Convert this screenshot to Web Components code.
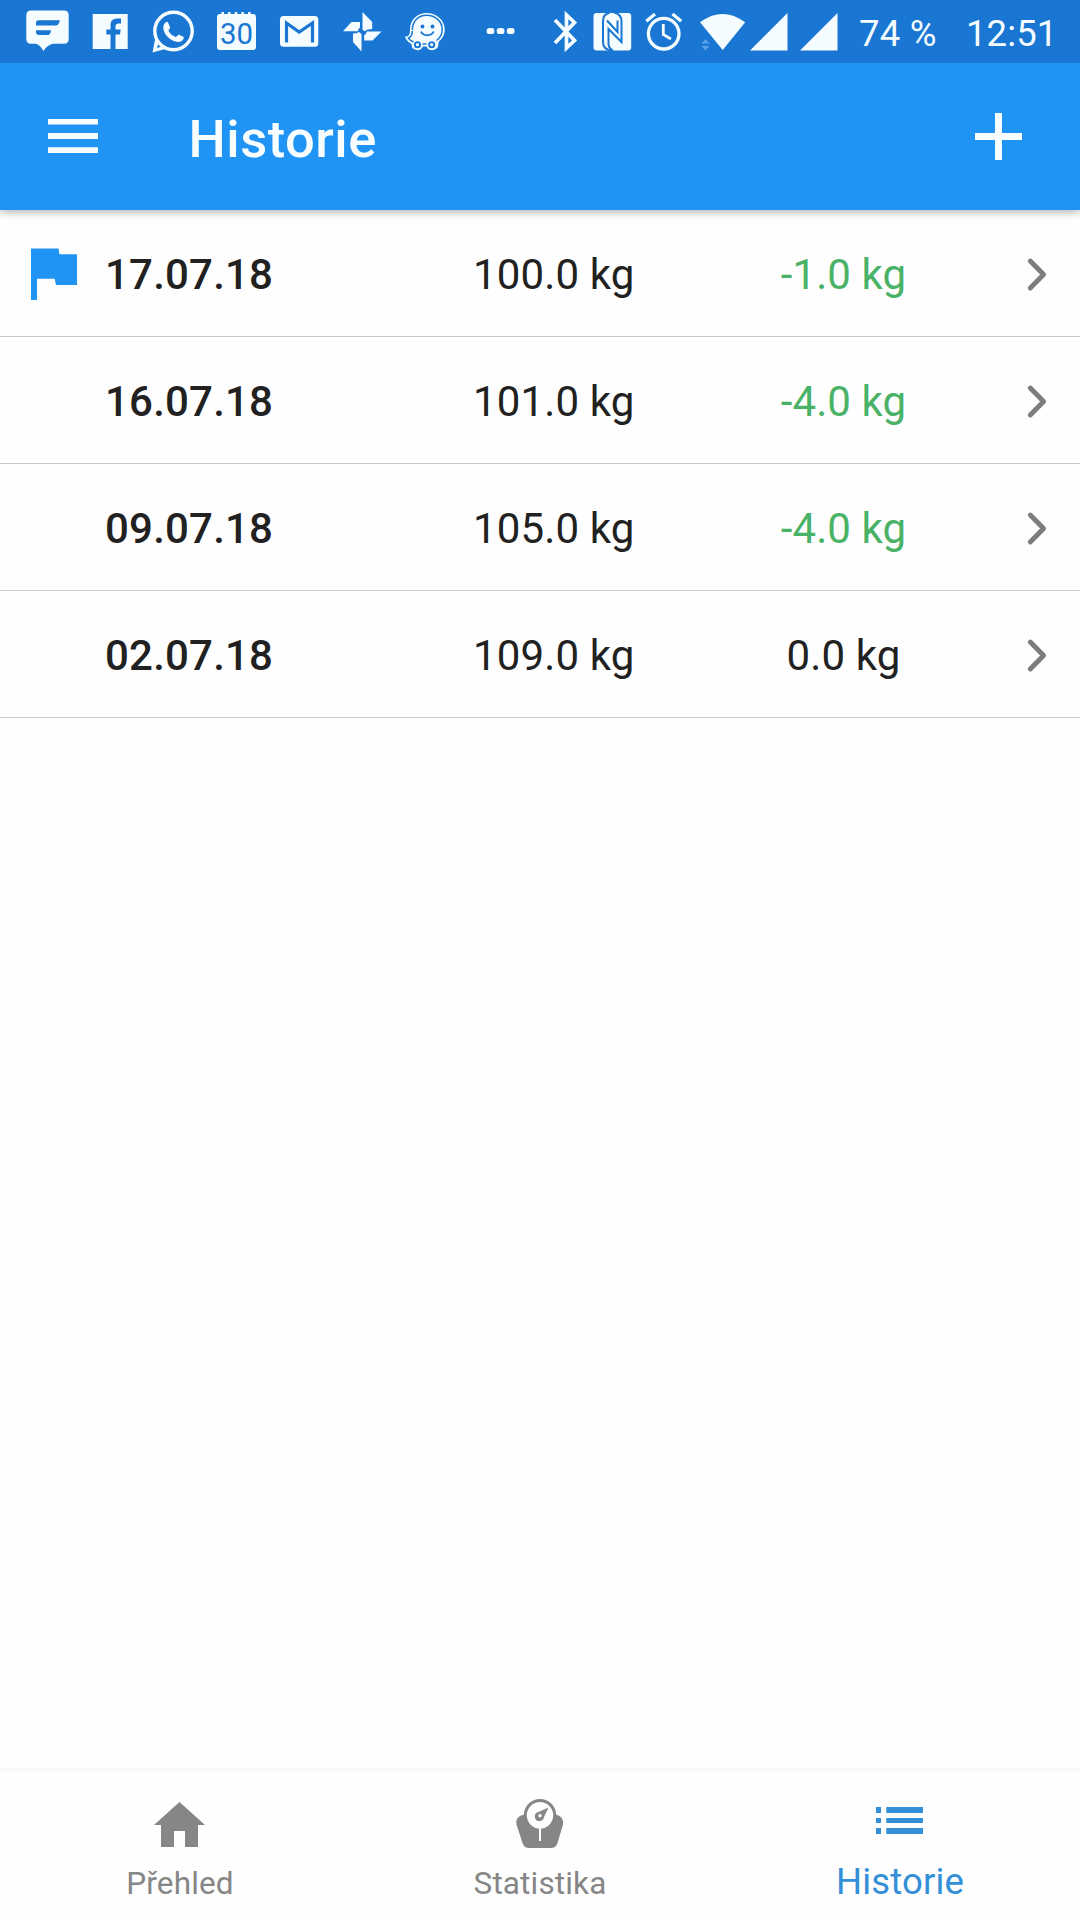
<!DOCTYPE html>
<html lang="cs">
<head>
  <meta charset="UTF-8">
  <meta name="viewport" content="width=device-width, initial-scale=1.0">
  <title>Historie</title>
  <style>
    body {
      margin: 0;
      font-family: Roboto, "Noto Sans", sans-serif;
      color: #212121;
      background: #fefefe;
    }
  </style>
</head>
<body>

  <app-screen>
    <status-bar slot="top" battery="74 %" time="12:51"></status-bar>
    <app-bar slot="top">Historie</app-bar>

    <history-row flagged date="17.07.18" weight="100.0 kg" trend="down">-1.0 kg</history-row>
    <history-row date="16.07.18" weight="101.0 kg" trend="down">-4.0 kg</history-row>
    <history-row date="09.07.18" weight="105.0 kg" trend="down">-4.0 kg</history-row>
    <history-row date="02.07.18" weight="109.0 kg">0.0 kg</history-row>

    <tab-bar slot="bottom">
      <tab-item icon="home">Přehled</tab-item>
      <tab-item icon="scale">Statistika</tab-item>
      <tab-item icon="list" active>Historie</tab-item>
    </tab-bar>
  </app-screen>

  <template id="screen-template">
    <style>
      :host {display: flex; flex-direction: column; height: 1920px; width: 1080px; overflow: hidden}
      main {flex: 1}
    </style>
    <slot name="top"></slot>
    <main><slot></slot></main>
    <slot name="bottom"></slot>
  </template>

  <template id="status-template">
    <style>
      :host {display: flex; align-items: center; height: 63px; padding-left: 15px; box-sizing: border-box; background: #1976d2; color: #f4fcff; font-size: 36.5px}
      span {line-height: 63px; white-space: nowrap; padding-top: 3px}
      .battery {width: 107px; margin-left: 11px; letter-spacing: .2px}
      .time {letter-spacing: .1px}
    </style>
    <app-icon name="message"></app-icon>
    <app-icon name="facebook"></app-icon>
    <app-icon name="whatsapp"></app-icon>
    <app-icon name="calendar"></app-icon>
    <app-icon name="mail"></app-icon>
    <app-icon name="photos"></app-icon>
    <app-icon name="waze"></app-icon>
    <app-icon name="more"></app-icon>
    <app-icon name="bluetooth"></app-icon>
    <app-icon name="nfc"></app-icon>
    <app-icon name="alarm"></app-icon>
    <app-icon name="wifi"></app-icon>
    <app-icon name="signal"></app-icon>
    <app-icon name="signal"></app-icon>
    <span class="battery"></span>
    <span class="time"></span>
  </template>

  <template id="bar-template">
    <style>
      :host {display: flex; align-items: center; height: 147px; padding: 0 58px 0 48px; box-sizing: border-box; background: #2094f5; color: #f8feff; box-shadow: 0 1px 9px rgba(0,0,0,.38); clip-path: inset(0 0 -14px 0)}
      h1 {flex: 1; margin: 0 0 0 90.5px; font-size: 52.5px; font-weight: 500; line-height: 60px; padding-top: 4px; letter-spacing: .5px}
      .menu {margin-bottom: 2px}
    </style>
    <app-icon class="menu" name="menu"></app-icon>
    <h1><slot></slot></h1>
    <app-icon name="plus"></app-icon>
  </template>

  <template id="row-template">
    <style>
      :host {display: grid; grid-template-columns: 105px 368px 307px 1fr auto; align-items: center; height: 127px; padding: 2px 32px 0 0; box-sizing: border-box; border-bottom: 1px solid #c8c8c8; font-size: 42px; line-height: 50px}
      span {padding-top: 2px}
      .flag {padding-left: 31px; color: #2094f3; visibility: hidden}
      :host([flagged]) .flag {visibility: visible}
      .date {font-weight: 500; letter-spacing: .2px}
      .weight {letter-spacing: .15px}
      :host([trend=down]) .change {color: #49b267}
      .change {width: 127px; text-align: center; letter-spacing: .1px}
      .next {color: #7d7d7d}
    </style>
    <app-icon class="flag" name="flag"></app-icon>
    <span class="date"></span>
    <span class="weight"></span>
    <span class="change"><slot></slot></span>
    <app-icon class="next" name="chevron"></app-icon>
  </template>

  <template id="tabs-template">
    <style>
      :host {display: flex; height: 152px; box-sizing: border-box; border-top: 4px solid #f9f9fc}
    </style>
    <slot></slot>
  </template>

  <template id="tab-template">
    <style>
      :host {flex: 1; display: flex; flex-direction: column; align-items: center; padding-top: 23px; color: #868686; font-size: 31.5px; line-height: 40px; letter-spacing: .15px}
      :host([active]) {color: #338fd8; font-size: 36.5px}
      span {height: 40px; margin-top: 11px}
      :host([active]) span {margin-top: 9px}
    </style>
    <app-icon></app-icon>
    <span><slot></slot></span>
  </template>

  <script>
    // [viewBox, drawing], 1 unit = 1px
    const icons = {
      message: ['15 0 63 63', `
        <path fill="currentColor" d="M31 10.500h33q4.700 0 4.700 4.700V39q0 4.700-4.700 4.700H53Q47 45 43.300 51Q40.500 45 36 43.700H31q-4.700 0-4.700-4.700V15.200q0-4.700 4.700-4.700z"/>
        <path fill="#1976d2" d="M38.500 20.200H60q-1.500 5.300-4 5.300H36v-3q0-2.300 2.500-2.300zM36 30.200h15q-.5 4.800-3 4.800h-9q-3 0-3-3z"/>`],
      facebook: ['78 0 63 63', `
        <path fill="currentColor" d="M92.700 14h35v35h-12.200V34.500h4.500l.7-5h-5.200v-3q0-3 3-3h2.500v-5h-4q-6.500 0-6.500 6.500v4.500h-4.200v5h4.200V49H92.700z"/>`],
      whatsapp: ['141 0 63 63', `
        <circle cx="173.500" cy="31" r="18.700" fill="none" stroke="currentColor" stroke-width="3.400"/>
        <path fill="currentColor" d="M155.500 37l-3 15.500 14.500-4-3-2.500-7 2 2-7z"/>
        <path fill="currentColor" d="M163.300 27.500c0-3 2-6 4.500-5.500l2.200 5c.3 1.500-1.500 2.500-1.500 3.700 1.800 3.500 4 5 7.300 6.300 1.200-.5 2-2.600 3.400-2.300l4.500 2.300c.3 2.800-2.200 5-5.500 5C170.500 41.800 163.300 34 163.300 27.500z"/>`],
      calendar: ['204 0 63 63', `
        <path fill="currentColor" d="M217 17q0-3 3-3h1.500v-2h2.500v2h4v-2h2.500v2h4.200v-2h2.500v2h4.200v-2h2.500v2h4.200v-2h2.500v2h2.400q3 0 3 3v30q0 3-3 3h-33q-3 0-3-3z"/>
        <text x="220" y="44" textLength="33" lengthAdjust="spacingAndGlyphs" font-size="30" font-weight="400" fill="#1976d2">30</text>`],
      mail: ['267 0 63 63', `
        <rect x="280" y="16" width="38.300" height="30.700" rx="3.500" fill="currentColor"/>
        <path fill="none" stroke="#1976d2" stroke-width="3.200" d="M286.500 42.500V23l12.700 9 13.300-9v19.500"/>`],
      photos: ['330 0 63 63', `
        <path fill="currentColor" d="M362.500 12l9.700 10v7q-5 0-7.200 2.300l-2.500-1.600zM381.500 31.500l-9 9h-8.300V35q2.500-1 2.500-3.500zM361.500 51.500L353 42v-8.500q4 0 6-1.500l2.500 2zM343 31.300l8.500-9.300h8.500v5.500q-2 1-2 3.800z"/>`],
      waze: ['393 0 63 63', `
        <path fill="currentColor" d="M410 29.500C410 20 417 13 426.500 13 436.500 13 444.700 20 444.700 29.500c0 5.500-2.500 9.500-6.200 12.500q.5 8-6.500 8.200-4 0-5.500-3.700h-3.500q-2 3.800-5.500 3.700-6-.5-6-6.200-4.500-2-6.700-7.500c4 .5 5.200-2 5.200-7z"/>
        <path fill="none" stroke="#1976d2" stroke-width="1.500" d="M412.300 30C412.500 21 418.500 15.300 426.500 15.300c9 0 15.700 6.200 15.700 14.200 0 5-2.200 8.500-5.700 11M426.500 44h-4M413.500 42c-2.500-1-4.200-2.300-5.200-3.800q4-1.700 4-7.200"/>
        <g fill="#1976d2"><circle cx="422.500" cy="26.500" r="1.900"/><circle cx="432.500" cy="26.500" r="1.900"/></g>
        <g fill="none" stroke="#1976d2" stroke-width="1.900"><path d="M421 31.500c2 5 10.500 5 12.500 0"/><circle cx="417.500" cy="44.700" r="2.600"/><circle cx="431.700" cy="44.700" r="2.600"/></g>`],
      more: ['456 0 84 63', `
        <g fill="currentColor"><rect x="486.700" y="28" width="7.600" height="6" rx="2.600"/><rect x="496.800" y="28" width="7.600" height="6" rx="2.600"/><rect x="506.900" y="28" width="7.600" height="6" rx="2.600"/></g>`],
      bluetooth: ['540 0 50 63', `
        <path fill="none" stroke="currentColor" stroke-width="3.700" d="M555 20l19.500 20.500-8 7.500V15l8 7.500L555 43"/>`],
      nfc: ['590 0 46 63', `
        <rect x="593.500" y="13" width="37.700" height="37.500" rx="3" fill="currentColor"/>
        <g fill="none" stroke="#1976d2" stroke-width="2">
          <path d="M609.500 13q-6.500 1-6.500 8v21q0 7.500 8.500 8.500"/>
          <path d="M614 12.500q7.500 1.500 7.500 9V42L608.500 29v15q0 4 4.500 6.500"/>
          <path d="M607 20.500l10.500 11.500V20.500"/>
        </g>`],
      alarm: ['636 0 56 63', `
        <g fill="none" stroke="currentColor" stroke-width="3.300">
          <circle cx="663.700" cy="33.700" r="15.300"/>
          <path d="M646.300 21.300l8.700-7.300M672.500 14l8.700 7.300"/>
          <path stroke-width="2.800" d="M663.300 24v10.500l7.700 4.500"/>
        </g>`],
      wifi: ['692 0 56 63', `
        <path fill="currentColor" d="M700 22.300Q722.500 5.500 745.200 22.300L722.700 50z"/>
        <path fill="#5ba3ea" d="M701.500 43.500l4-4.500 4 4.500zM701.500 46l4 4.500 4-4.500z"/>`],
      signal: ['748 0 50 63', `<path fill="currentColor" d="M750 50.500L787.500 13v37.500z"/>`],
      menu: ['0 0 50 34', `<path fill="currentColor" d="M0 0h50v5.500H0zM0 14h50v6H0zM0 28.300h50v5.700H0z"/>`],
      plus: ['0 0 47 47', `<path fill="currentColor" d="M20 0h7v20h20v7H27v20h-7V27H0v-7h20z"/>`],
      flag: ['31 248 46 52', `<path fill="currentColor" d="M31 248.500h27.500l1 5.800H77V285H56l-1.300-6.300H37V300h-6z"/>`],
      chevron: ['1026 257 22 35', `<path fill="none" stroke="currentColor" stroke-width="4.900" stroke-linecap="round" stroke-linejoin="round" d="M1030.300 261l13.300 13.500L1030.300 288"/>`],
      home: ['150 1795 60 58', `<path fill="currentColor" d="M179.500 1802L205 1825h-7v22h-13v-16h-11v16h-13v-22h-7z"/>`],
      scale: ['510 1795 60 58', `
        <path fill="currentColor" d="M524 1814.500q-9.500 2.500-7.500 10l6 18.500q1.500 5 6.500 5h22q5 0 6.500-5l5.500-18.500q1.500-7.500-7-10z"/>
        <circle cx="540" cy="1815.300" r="16.200" fill="currentColor"/>
        <circle cx="540" cy="1815.300" r="13.200" fill="#fefefe"/>
        <path fill="none" stroke="#fefefe" stroke-width="2" d="M540 1828v13"/>
        <path fill="currentColor" d="M548.500 1807.500l-4.500 9.500a4.600 4.600 0 1 1-5.500-5z"/>
        <circle cx="540" cy="1815.700" r="1.700" fill="#fefefe"/>`],
      list: ['870 1795 60 58', `<path fill="currentColor" d="M876 1807h5v6h-5zM886.300 1807H923v6h-36.700zM876 1818h5v5h-5zM886.300 1818H923v5h-36.700zM876 1828h5v6h-5zM886.300 1828H923v6h-36.700z"/>`]
    };

    function attach(el, id) {
      el.attachShadow({mode : 'open'});
      el.shadowRoot.append(document.getElementById(id).content.cloneNode(true));
      return el.shadowRoot;
    }

    class AppIcon extends HTMLElement {
      connectedCallback() {
        const [box, shape] = icons[this.getAttribute('name')];
        const [, , w, h] = box.split(' ');
        this.attachShadow({mode : 'open'});
        this.shadowRoot.innerHTML = `
          <style>:host {display: block; flex: none} svg {display: block}</style>
          <svg width="${w}" height="${h}" viewBox="${box}" aria-hidden="true">${shape}</svg>`;
      }
    }

    class AppScreen extends HTMLElement {
      connectedCallback() { attach(this, 'screen-template'); }
    }

    class StatusBar extends HTMLElement {
      connectedCallback() {
        const root = attach(this, 'status-template');
        root.querySelector('.battery').textContent = this.getAttribute('battery');
        root.querySelector('.time').textContent = this.getAttribute('time');
      }
    }

    class AppBar extends HTMLElement {
      connectedCallback() { attach(this, 'bar-template'); }
    }

    class HistoryRow extends HTMLElement {
      connectedCallback() {
        const root = attach(this, 'row-template');
        root.querySelector('.date').textContent = this.getAttribute('date');
        root.querySelector('.weight').textContent = this.getAttribute('weight');
      }
    }

    class TabBar extends HTMLElement {
      connectedCallback() { attach(this, 'tabs-template'); }
    }

    class TabItem extends HTMLElement {
      connectedCallback() {
        // the icon needs its name before it is put in the page
        this.attachShadow({mode : 'open'});
        const part = document.getElementById('tab-template').content.cloneNode(true);
        part.querySelector('app-icon').setAttribute('name', this.getAttribute('icon'));
        this.shadowRoot.append(part);
      }
    }

    customElements.define('app-icon', AppIcon);
    customElements.define('app-screen', AppScreen);
    customElements.define('status-bar', StatusBar);
    customElements.define('app-bar', AppBar);
    customElements.define('history-row', HistoryRow);
    customElements.define('tab-bar', TabBar);
    customElements.define('tab-item', TabItem);
  </script>
</body>
</html>
